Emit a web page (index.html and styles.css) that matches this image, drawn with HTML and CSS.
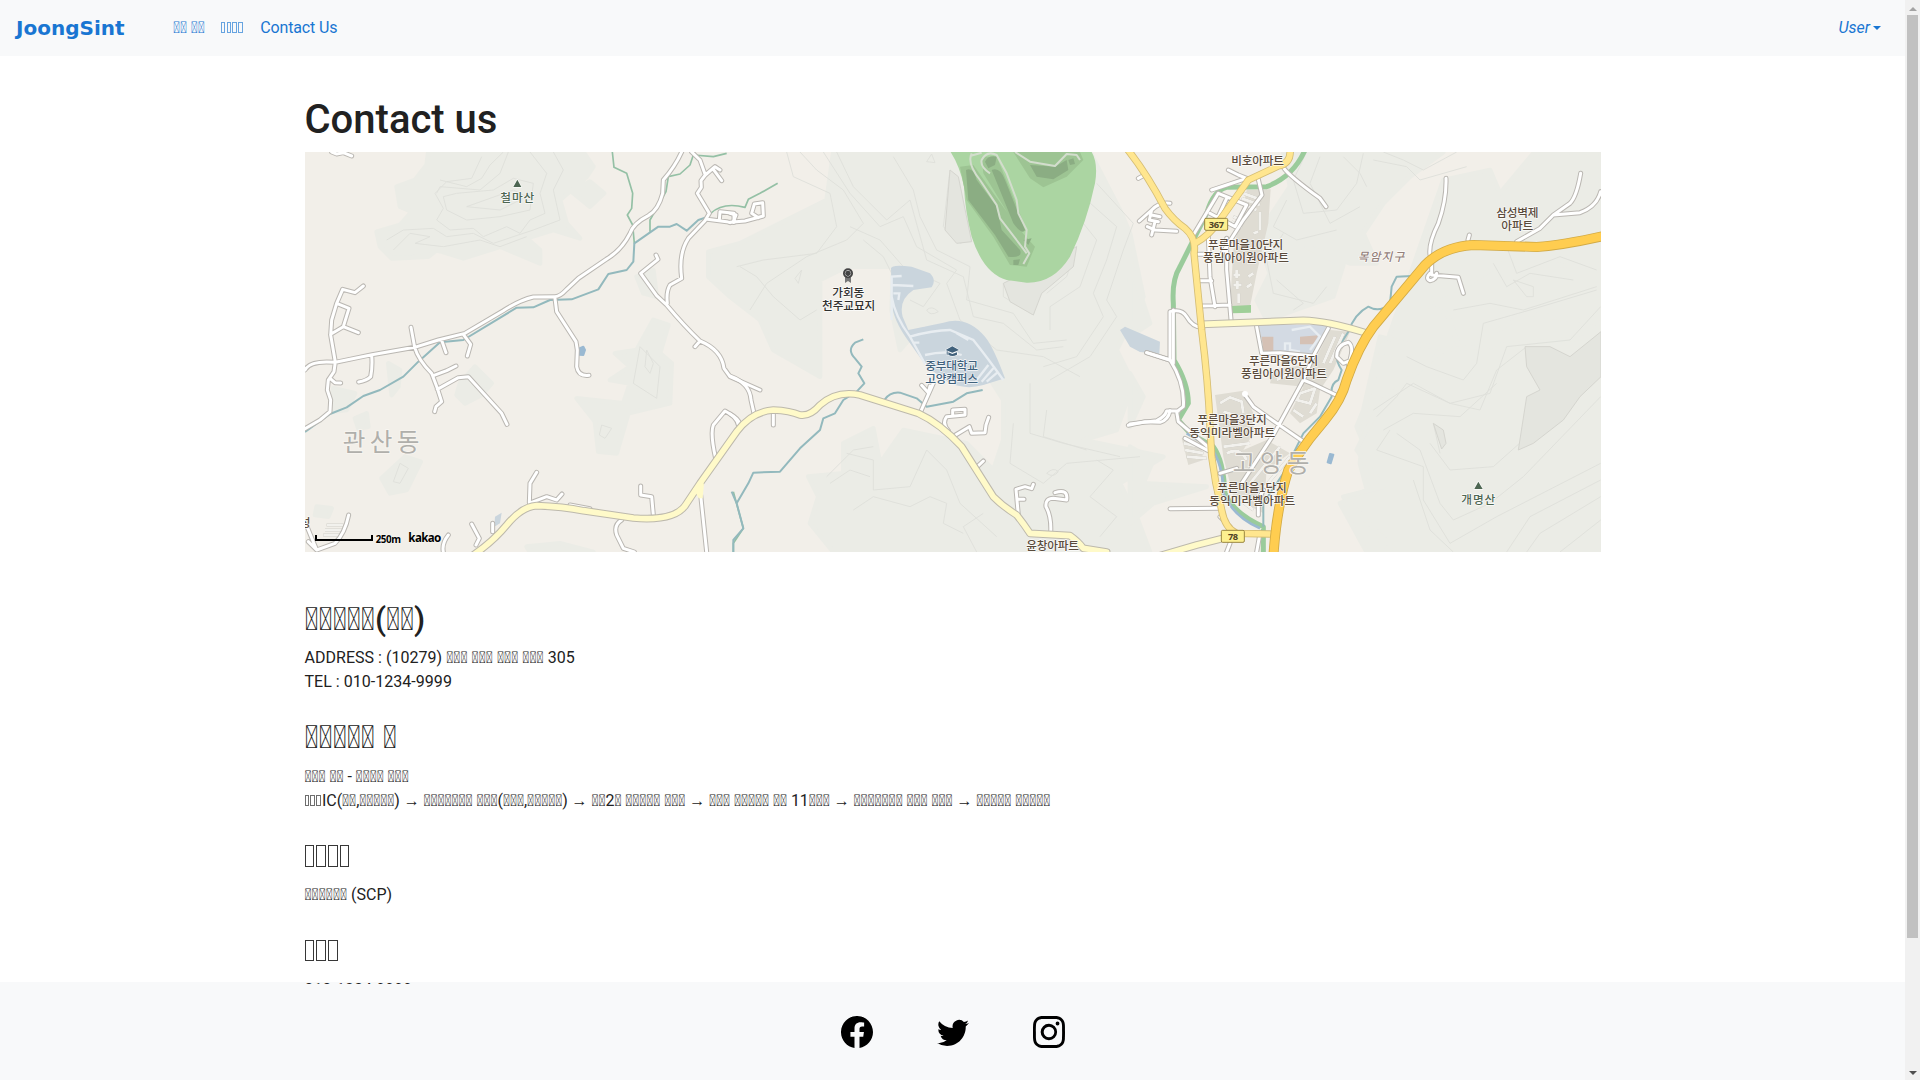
FILE: index.html
```html
<!DOCTYPE html>
<html lang="ko">
<head>
<meta charset="utf-8">
<title>Contact us</title>
<link rel="stylesheet" href="styles.css">
</head>
<body>
<div class="page">
  <nav class="navbar">
    <a class="brand">JoongSint</a>
    <div class="links">
      <a>&#xE001;&#xE001; &#xE001;&#xE001;</a>
      <a class="boxes"><i></i><i></i><i></i><i></i></a>
      <a>Contact Us</a>
    </div>
    <a class="user"><em>User</em><span class="caret"></span></a>
  </nav>

  <main class="content">
    <div class="container">
      <h1>Contact us</h1>
      <svg class="map" viewBox="15 6 3888 1200" preserveAspectRatio="none">
        <defs>
          <g id="lanes">
            <path d="M95 6L110 12L130 8L155 18M190 408L165 428L128 418L110 460L95 510L92 555L106 636L102 665L85 690L82 720L92 750L90 785L60 810L15 836M110 460L147 475L130 530L92 553M130 530L175 548M90 685L105 698L122 699M215 615Q218 650 212 680Q200 692 176 696M333 532L344 592Q355 630 395 670L412 715L425 755L408 770L404 785M400 677L440 662L468 648M412 718L475 683L505 680L605 790L621 823M424 568L438 608M490 553L512 583L502 618M765 445L770 485L828 575L832 600L830 650Q835 680 867 676M15 660Q30 630 106 637M1145 6Q1125 50 1090 90L1088 130Q1075 180 1045 197Q1000 220 990 250Q965 300 920 327L835 385L800 418Q780 440 765 440L700 441Q660 450 610 482L495 550L415 570L344 592L216 614L106 637M1175 6L1200 30L1216 75L1203 92L1204 112L1192 130L1228 190L1215 212L1165 265Q1135 310 1145 385L1110 405Q1098 425 1102 460M1216 75L1245 50L1260 60M1240 58L1265 92M1222 208L1280 215L1290 218M1258 210L1260 185L1302 190V217M1068 315L1074 328L1022 370L1070 437L1100 465Q1150 525 1200 573Q1265 600 1272 655L1290 680L1380 720M1200 573L1185 590M710 967L690 1000L688 1058M695 1057L740 1040L770 1050L786 1032M810 1065L870 1076M1022 1008V1035L1055 1040L1060 1095M965 1110Q940 1125 950 1155L970 1195L1003 1206M1202 1035L1220 1206M1315 825Q1310 800 1275 783L1240 825Q1230 850 1247 925M515 1122L538 1165L528 1185M578 1120V1145M445 1155Q425 1180 430 1206M146 1095Q135 1150 105 1180L50 1200L25 1175M15 1115L50 1200"/>
            <g transform="translate(1290 0)">
              <path d="M0 217L45 213L100 198L98 158L73 162L65 190L85 203M0 190L18 195L10 217M0 678Q60 700 63 750L72 790M0 792Q25 805 30 823M130 790V825M572 785L610 700M575 706L595 728L600 708M672 858L718 830L725 850L765 848L768 825L776 802M655 842Q635 820 650 800L705 795V778L668 780V798M742 950L760 933M865 1095L858 1018L885 1010L905 1016L910 1003M862 1048L882 1048M962 1150Q965 1100 948 1070Q945 1045 970 1045L1010 1050Q1015 1015 975 1028M1225 85L1240 77M1320 160Q1290 155 1265 180L1228 213M1265 180L1258 210L1285 215M1265 195L1290 200M1265 255L1275 215M1252 230L1275 240L1340 244M1250 608L1320 630L1330 640V480M1195 826L1245 815L1290 817Q1315 810 1320 782"/>
            </g>
            <g transform="translate(2490 0)">
              <path d="M462 55Q480 80 570 145L588 170M295 60L325 75L350 85L290 105L245 120M385 88L396 135L340 210L270 320M190 255L265 130L350 165L315 230L240 190M290 145L262 205M235 260L240 380L255 470M290 265V360L304 520M205 313H240M205 392H245M215 468L300 465M120 630V485Q155 475 170 500Q190 535 220 530M50 608L120 630Q165 700 160 770L140 785L145 815L245 900M0 822L80 812Q105 800 110 783H145M380 530L395 610L450 608L550 618L595 535M550 618L520 690L430 855L335 1000M520 690L545 700L622 737M345 735L370 770L440 820L525 878M120 1076L270 1075M270 970L320 955M165 865L240 905M900 315Q895 280 925 220Q950 150 948 85M905 320V375L985 382L1000 430M900 370Q885 385 900 392Q920 390 920 370M1160 275L1230 235L1270 195L1350 188Q1400 170 1412 125M1270 195L1320 160Q1340 140 1352 70M1018 255L1014 270M665 630L640 640L620 620Q620 585 655 577Q675 590 655 645M300 1180L290 1206M390 1150L380 1206M270 1100L300 1130M385 1095V1050L400 1020"/>
            </g>
          </g>
          <path id="local" d="M505 1225Q575 1180 620 1125Q665 1070 710 1067Q790 1070 850 1082L1000 1104Q1130 1115 1160 1060L1200 1000L1310 845Q1355 785 1420 780Q1470 782 1500 795Q1530 800 1560 765Q1610 720 1680 735L1855 790Q1920 820 1985 890L2080 1040Q2110 1070 2150 1095Q2170 1120 2190 1150L2310 1157Q2335 1175 2350 1195L2420 1206M2570 1220L2690 1185L2770 1165M2705 523L3010 511Q3080 512 3195 548"/>
          <path id="trunk" d="M2480 -5Q2540 70 2595 175Q2620 210 2655 235Q2690 265 2682 310L2705 540Q2725 700 2730 830L2735 920Q2745 1000 2765 1080Q2775 1135 2810 1150L2910 1152M2685 280Q2730 255 2760 210L2845 90L2935 48Q2975 40 2970 -5"/>
          <path id="highway" d="M2920 1220Q2930 1070 2965 960Q2990 920 3030 865L3075 810Q3125 750 3140 690Q3175 590 3220 530L3375 345Q3430 290 3520 285L3710 291Q3790 285 3910 258"/>
        </defs>

        <rect class="land" x="15" y="6" width="3888" height="1200"/>
        <g class="hill">
          <path d="M385 6L380 45L345 90L290 110L300 170L335 185L300 225L230 245L240 290L275 325L385 320L410 300L490 325L600 290L720 340L720 300L680 265L760 240L840 265L800 220L780 150L860 80L880 50L850 6ZM815 125L870 95L912 130L870 170ZM1060 510L1105 525L1080 610L1115 640L1110 760L985 790L950 910L895 905L885 815L830 745L970 760L990 700L930 690L990 650L945 610L1010 600ZM315 920L362 935L320 1020L270 1030L245 985ZM1225 305L1320 280L1580 150L1600 6L2370 6L2460 180L2490 250L2530 440L2490 520L2450 600L2500 700L2450 840L2350 870L2590 920L2460 1000L2510 1100L2550 1206L1600 1206L1530 1120L1555 1040L1525 980L1630 970L1630 880L1720 835L1740 940L1810 840L2000 880L2080 960L2110 870L2110 750L1990 560L1870 520L1800 600L1775 480L1780 350L1640 350L1560 390L1560 680L1420 600L1380 510L1290 440L1225 380ZM2950 6L2970 110L2870 260L2910 370L2870 450L2900 510L3100 440L3130 345L3020 290L3150 340L3230 340L3190 250L3250 160L3330 80L3430 6ZM3430 90L3570 60L3600 130L3700 10L3903 6V520L3680 490L3490 600L3480 700L3560 1206H3200L3120 1060L3240 1000L3170 830L3190 780L3240 560L3320 580L3480 600L3440 490L3370 460L3510 400L3600 340L3900 350V1206H3250L3180 940L3200 750Z"/>
          <path d="M480 700L525 650L575 700L545 735L495 760L470 735ZM165 805L200 790L205 830L175 835ZM265 640L300 660L295 710L275 735ZM100 715L165 730L140 780L95 785ZM2490 340L2550 520L2490 560ZM2490 670L2530 740L2490 830ZM2490 890L2560 930L2530 1000L2720 1010L2560 1060L2490 1120ZM50 1070L95 1075L85 1100L45 1095ZM680 1190L780 1180L880 1206H690ZM1010 380L1060 360L1070 440L1030 430ZM3240 760L3430 600L3903 560V1206H3290L3130 1040L3250 1010L3170 900Z"/>
        </g>
        <g class="contour">
          <path d="M420 90L500 110L545 85L570 45L610 6M410 130L420 110L540 120L600 70L625 6M545 20L515 85L440 95L405 130L430 175L410 210L450 240L520 235L550 260L620 230L660 250L690 210L735 190L720 130L740 70L690 6M430 140L470 130L580 120L640 85L700 100L690 180L600 200L500 210L440 180ZM500 170L640 120L680 140L600 180ZM260 270L310 240L400 235L440 260L520 250L580 280L700 240L780 210L760 120L790 60L760 6M280 300L330 250L390 260L345 280L430 290L540 270L600 290L680 260M1040 600L1060 640L1050 670L1035 650ZM1020 590L1080 650L1070 745L1000 700ZM905 825L935 835L915 865L898 855ZM300 940L325 955L300 1000L280 995Z"/>
          <g transform="translate(1290 0)">
            <path d="M170 6L190 80L300 130L320 230L260 310L100 330L20 350M210 6L260 60L340 120L400 220L350 270L230 320L110 400L60 480M280 6L360 130L450 230L520 200L560 290L680 360L650 400L690 510L800 600L940 620L1050 680M320 6L370 110L470 210L540 150L590 330L700 380L730 500L820 520L920 600L1000 590M490 20L550 120L570 200L620 300L720 350L710 450L850 490L910 580L1010 570M360 230L450 270L520 350L630 400L580 470L540 450M400 270L460 320L500 400M30 350L80 380L130 440L210 510L260 480M590 480Q605 465 625 485Q600 500 590 480M590 35L605 12L615 38ZM660 60L640 230L690 280L720 270M820 400L820 440L910 495L930 420M1040 290L1010 380L950 430M1100 100L1210 220L1180 300L1130 450L1160 500L1080 620L960 690M1070 150L1160 230L1130 330L1090 430L1120 500L1040 620L940 650M1060 220L1100 270L1050 410L960 470L960 540M950 970Q970 950 985 965Q970 985 950 970M195 385L215 360L205 400ZM350 910L430 930L430 1020L540 1010L590 900L650 960L690 1060L800 1160M370 1080L430 1040L540 1070L600 1040L650 1060L640 1120L700 1150M290 980L370 900L430 890M300 1000L360 960L420 980M850 820L840 940L940 1000L1010 940L1230 920M900 700L900 850L1000 880L1170 920M950 780L940 860L1070 900M760 1090L700 1130L740 1206M1100 930L1150 960L1080 1040L1160 1100L1110 1160"/>
          </g>
          <g transform="translate(2490 0)">
            <path d="M530 6L490 90L520 190L620 180L680 100L700 10M570 20L540 100L600 220L690 170M640 20L690 70L710 110M470 150L430 230L500 270L620 240M460 250L410 330L430 430L550 460L590 410M440 390L520 460L490 480M1150 390L1210 410V440L1190 440ZM970 480L1080 460L1180 480L1400 410M830 620L890 650L1000 690L1040 640L1060 520L1200 480L1400 420M730 780L850 700L960 760L1080 730L1130 590L1320 570L1412 470M740 800L800 740L830 700L960 760L1050 780L1100 660L1190 590M760 840L850 790L990 800L1100 700M780 840L740 900L880 950L880 1050L960 1180L1100 1100L1412 940M800 850L870 900L930 1060L970 1110L1080 1060L1180 980L1412 740M900 880L960 960L1090 950L1180 870M910 820L930 910M850 990L900 1140L970 1206M1412 990L1200 1100L1130 1206M1412 1040L1230 1150L1190 1206M1412 1110L1290 1206M730 30L830 50L870 90L1010 50M760 6L820 30L880 60L980 6M1130 290L1160 370L1290 320L1400 360M1090 340L1130 410L1200 370L1330 390"/>
          </g>
        </g>
        <g class="peak">
          <path d="M3675 590L3750 590L3810 620L3903 545V680L3840 740L3790 810L3700 880L3655 900L3680 740L3720 720L3680 650ZM3400 820L3430 840L3438 880L3425 897ZM1950 60L1935 240L1970 280L2015 275L1975 80ZM2110 400L2130 455L2200 495L2225 430L2320 350L2330 290Z"/>
        </g>
        <g class="urban">
          <path d="M2840 120L2912 118L2905 220L2870 370L2850 470H2790L2800 300ZM2745 735L2830 722L2860 790L2860 850L2830 900L2900 870L2970 910L2900 960L2890 1090L2800 1040L2770 920ZM3090 540L3150 545L3100 660L3060 720L3050 790L3000 820L2970 790L3010 710L2910 700L2920 660L3040 640ZM2645 865L2700 870L2710 930L2665 945Z"/>
        </g>
        <g class="campus">
          <path d="M1773 355Q1775 342 1835 350L1890 370Q1910 390 1895 412L1840 420Q1795 450 1808 500L1825 540L1930 518Q2000 495 2055 560Q2080 590 2115 685L2050 705Q2000 720 1950 700L1880 650L1830 580Q1770 500 1775 440ZM2460 540L2475 530L2580 575L2578 612L2520 606L2490 590ZM585 1100L605 1088L600 1120L583 1130Z"/>
          <path class="district" d="M2875 525H3085L3040 612H2895Z"/>
        </g>
        <path class="shop" d="M2885 560H2920V605H2890ZM3000 560L3055 556L3040 583H3000Z"/>
        <path class="lawn" d="M2795 468L2853 465V488L2797 490Z"/>

        <g class="golf" transform="translate(1290 0)">
          <path class="green" d="M662 6H1085Q1105 40 1095 100Q1070 220 1020 320Q970 400 890 398L830 390Q760 370 725 260Q705 180 702 110Q690 50 662 6Z"/>
          <path class="rough" d="M690 50L730 45L790 130L870 240L915 290L890 350L840 345L790 260L710 150ZM755 20L800 20L890 240L870 250L760 70ZM850 6H1050L1060 30L1010 80L940 112L900 85Z"/>
          <path class="fairway" d="M708 60Q730 50 740 90L800 170L815 240L870 300Q880 325 835 320L795 255L715 150ZM785 60Q810 50 825 90L885 240Q875 255 850 220ZM900 45L975 50L1010 30L1015 60L970 88L920 80ZM765 35Q775 15 800 20L795 45L775 55ZM850 330L870 328L865 345H850ZM880 270L905 265L895 285ZM1015 30L1030 25L1035 42L1020 45Z"/>
          <path class="cart" d="M725 10Q710 40 750 90L800 165L810 205L890 310M780 70Q750 50 755 30Q770 0 800 15L830 70L860 150L865 190L890 240L885 290L898 310L880 342M855 6L900 35L975 48L1010 12L1040 15L1050 30M720 18L755 8"/>
        </g>

        <g class="stream">
          <path class="bank" d="M937 6L942 52L980 70L998 130L995 175L982 195L998 225L1003 280M1280 10L1240 20L1180 15L1170 45L1140 72L1105 80L1098 125L1050 210V245M1232 190Q1270 155 1335 172L1345 148L1380 130L1433 100M1300 1025L1330 1135L1300 1180V1206"/>
          <path d="M15 846L90 792L140 772L190 738L240 720L310 680L355 635L420 577L490 570L650 473L700 472L750 450L815 448L895 418L925 372L980 360L1000 335L1003 280L1075 230L1110 230L1130 222L1160 242L1195 210L1225 200"/>
          <path d="M1690 568L1665 578Q1640 600 1665 625L1685 650L1675 670L1693 700L1670 725L1630 750L1605 790L1570 805L1560 840L1500 895L1440 965L1360 968L1345 1000L1310 1060L1295 1025M1310 1060L1330 1135L1300 1170V1206M1753 750Q1770 725 1800 728L1850 745L1880 770L1960 755L2000 730L2048 720"/>
          <path class="river" d="M3015 0Q2980 80 2900 110L2780 112Q2740 120 2720 190L2640 350Q2615 390 2620 460L2622 630Q2665 700 2665 760L2635 810L2670 850L2740 890Q2770 930 2775 1030Q2800 1090 2890 1130V1206"/>
          <path class="river blue" d="M2660 850L2730 890Q2770 940 2770 1030Q2800 1100 2880 1135"/>
          <path d="M3390 315L3375 345M3335 378L3290 380L3275 410L3270 460Q3240 490 3205 470Q3165 490 3145 545L3110 600Q3105 630 3125 660L3115 690Q3090 700 3095 740L3060 800L3010 850L2950 970L2890 1060V1130"/>
          <path class="pond" d="M838 595L850 590L855 600L850 615L838 614ZM3090 912L3100 914L3092 940L3083 937Z"/>
        </g>

        <g class="blocks">
          <path d="M2830 130L2885 150M2825 145L2880 165M2820 160L2870 180M2800 200L2830 215M2795 215L2825 235M2880 185V240M2860 250L2875 245M2800 375H2820M2810 360V385M2845 380L2860 370M2800 405H2825M2812 392V418M2840 412L2855 402M2816 430V460M2760 760L2790 742L2825 755L2830 790M2770 785L2820 800M2770 890L2850 880M2780 910Q2820 890 2840 930M3090 640L3130 550M3070 640L3105 560M2930 690L2990 660M3000 730L3045 715L3030 760L2990 750ZM3030 790L3050 760M2980 780L3010 800M2850 1000L2940 890M2870 1040L2970 920M2820 1050L2860 1080M2650 880L2700 890M2655 900L2710 910M2660 920L2720 925M80 1125H130M75 1140H128M70 1155H120"/>
        </g>
        <path class="path" d="M1775 510V380L1805 378M1777 405L1840 408M1780 430L1798 430L1795 450M1775 440Q1785 500 1830 560L1885 660M1830 560Q1900 540 1950 540L2020 570Q2060 620 2110 690M1970 550L2005 570M1840 578H1858M1875 615Q1940 600 1985 615M2030 690L2065 645M2045 695L2080 655M2060 695L2095 665M2975 540L3030 530L3060 560L3030 600M2955 600V580H2970V600L3000 605"/>

        <use href="#lanes" class="casing lane"/>
        <use href="#lanes" class="fill lane"/>
        <use href="#local" class="casing local"/>
        <use href="#local" class="fill local"/>
        <path class="ramp" d="M1180 1015L1212 1000L1208 1045L1196 1045Z"/>
        <use href="#trunk" class="casing trunk"/>
        <use href="#trunk" class="fill trunk"/>
        <use href="#highway" class="casing highway"/>
        <use href="#highway" class="fill highway"/>
        <circle class="knob" cx="2835" cy="732" r="9"/>

        <g class="shield">
          <rect x="2714" y="205" width="69" height="36" rx="4"/>
          <rect x="2764" y="1141" width="69" height="36" rx="4"/>
          <text x="2749" y="234" textLength="46">367</text>
          <text x="2799" y="1170" textLength="30">78</text>
        </g>
        <g class="town">
          <text x="243" y="902" textLength="230">관산동</text>
          <text x="2913" y="966" textLength="230">고양동</text>
        </g>
        <g class="label mountain">
          <path d="M652 89L664 111H640ZM3535 995L3548 1017H3523Z"/>
          <text x="652" y="155" textLength="102">철마산</text>
          <text x="3535" y="1061" textLength="102">개명산</text>
        </g>
        <g class="label place">
          <text x="1645" y="441" textLength="96">가회동</text>
          <text x="1646" y="481" textLength="160">천주교묘지</text>
          <path class="tail" d="M1635 380H1653V399L1644 393L1635 399Z"/>
          <circle class="medal" cx="1644" cy="370" r="15"/>
          <circle class="ring" cx="1644" cy="370" r="8"/>
        </g>
        <g class="label school">
          <text x="1955" y="661" textLength="158">중부대학교</text>
          <text x="1955" y="699" textLength="158">고양캠퍼스</text>
          <path d="M1937 600L1957 589L1977 600L1957 608ZM1945 607L1957 612L1971 607V614Q1957 622 1945 614ZM1940 604H1943V614H1940Z"/>
        </g>
        <g class="label apt">
          <text x="2873" y="45" textLength="158">비호아파트</text>
          <text x="2837" y="297" textLength="226">푸른마을10단지</text>
          <text x="2838" y="335" textLength="258">풍림아이원아파트</text>
          <text x="2951" y="645" textLength="208">푸른마을6단지</text>
          <text x="2952" y="683" textLength="258">풍림아이원아파트</text>
          <text x="2796" y="823" textLength="208">푸른마을3단지</text>
          <text x="2797" y="861" textLength="258">동익미라벨아파트</text>
          <text x="2856" y="1026" textLength="208">푸른마을1단지</text>
          <text x="2857" y="1064" textLength="258">동익미라벨아파트</text>
          <text x="3652" y="202" textLength="127">삼성벽제</text>
          <text x="3652" y="240" textLength="96">아파트</text>
          <text x="2258" y="1200" textLength="158">윤창아파트</text>
          <text x="15" y="1131">성</text>
        </g>
        <text class="label area" x="3243" y="333" textLength="140">목암지구</text>
        <path class="scale" d="M48 1155V1170H216V1155"/>
        <g class="credit">
          <text x="227" y="1179" textLength="76">250m</text>
          <text class="logo" x="325" y="1177" textLength="99">kakao</text>
        </g>
      </svg>

      <section class="first">
        <h2>&#xE001;&#xE001;&#xE001;&#xE001;&#xE001;(&#xE001;&#xE001;)</h2>
        <p>ADDRESS : (10279) &#xE001;&#xE001;&#xE001; &#xE001;&#xE001;&#xE001; &#xE001;&#xE001;&#xE001; &#xE001;&#xE001;&#xE001; 305<br>TEL : 010-1234-9999</p>
      </section>
      <section>
        <h2>&#xE001;&#xE001;&#xE001;&#xE001;&#xE001; &#xE001;</h2>
        <p class="route">&#xE001;&#xE001;&#xE001; &#xE001;&#xE001; - &#xE001;&#xE001;&#xE001;&#xE001; &#xE001;&#xE001;&#xE001;<br><span class="boxes"><i></i><i></i><i></i></span>IC(&#xE001;&#xE001;,&#xE001;&#xE001;&#xE001;&#xE001;&#xE001;) → &#xE001;&#xE001;&#xE001;&#xE001;&#xE001;&#xE001;&#xE001; &#xE001;&#xE001;&#xE001;(&#xE001;&#xE001;&#xE001;,&#xE001;&#xE001;&#xE001;&#xE001;&#xE001;) → &#xE001;&#xE001;2&#xE001; &#xE001;&#xE001;&#xE001;&#xE001;&#xE001; &#xE001;&#xE001;&#xE001; → &#xE001;&#xE001;&#xE001; &#xE001;&#xE001;&#xE001;&#xE001;&#xE001; &#xE001;&#xE001; 11&#xE001;&#xE001;&#xE001; → &#xE001;&#xE001;&#xE001;&#xE001;&#xE001;&#xE001;&#xE001; &#xE001;&#xE001;&#xE001; &#xE001;&#xE001;&#xE001; → &#xE001;&#xE001;&#xE001;&#xE001;&#xE001; &#xE001;&#xE001;&#xE001;&#xE001;&#xE001;</p>
      </section>
      <section>
        <h2 class="boxes"><i></i><i></i><i></i><i></i></h2>
        <p>&#xE001;&#xE001;&#xE001;&#xE001;&#xE001;&#xE001; (SCP)</p>
      </section>
      <section>
        <h2 class="boxes"><i></i><i></i><i></i></h2>
        <p>010-1234-9999</p>
      </section>
    </div>
  </main>

  <footer class="footer">
    <svg viewBox="0 0 16 16"><path d="M16 8.049c0-4.446-3.582-8.05-8-8.05C3.58 0-.002 3.603-.002 8.05c0 4.017 2.926 7.347 6.75 7.951v-5.625h-2.03V8.05H6.75V6.275c0-2.017 1.195-3.131 3.022-3.131.876 0 1.791.157 1.791.157v1.98h-1.009c-.993 0-1.303.621-1.303 1.258v1.51h2.218l-.354 2.326H9.25V16c3.824-.604 6.75-3.934 6.75-7.951z"/></svg>
    <svg viewBox="0 0 16 16"><path d="M5.026 15c6.038 0 9.341-5.003 9.341-9.334 0-.14 0-.282-.006-.422A6.685 6.685 0 0 0 16 3.542a6.658 6.658 0 0 1-1.889.518 3.301 3.301 0 0 0 1.447-1.817 6.533 6.533 0 0 1-2.087.793A3.286 3.286 0 0 0 7.875 6.03a9.325 9.325 0 0 1-6.767-3.429 3.289 3.289 0 0 0 1.018 4.382A3.323 3.323 0 0 1 .64 6.575v.045a3.288 3.288 0 0 0 2.632 3.218 3.203 3.203 0 0 1-.865.115 3.23 3.23 0 0 1-.614-.057 3.283 3.283 0 0 0 3.067 2.277A6.588 6.588 0 0 1 .78 13.58a6.32 6.32 0 0 1-.78-.045A9.344 9.344 0 0 0 5.026 15z"/></svg>
    <svg viewBox="0 0 16 16"><path d="M8 0C5.829 0 5.556.01 4.703.048 3.85.088 3.269.222 2.76.42a3.917 3.917 0 0 0-1.417.923A3.927 3.927 0 0 0 .42 2.76C.222 3.268.087 3.85.048 4.7.01 5.555 0 5.827 0 8.001c0 2.172.01 2.444.048 3.297.04.852.174 1.433.372 1.942.205.526.478.972.923 1.417.444.445.89.719 1.416.923.51.198 1.09.333 1.942.372C5.555 15.99 5.827 16 8 16s2.444-.01 3.298-.048c.851-.04 1.434-.174 1.943-.372a3.916 3.916 0 0 0 1.416-.923c.445-.445.718-.891.923-1.417.197-.509.332-1.09.372-1.942C15.99 10.445 16 10.173 16 8s-.01-2.445-.048-3.299c-.04-.851-.175-1.433-.372-1.941a3.926 3.926 0 0 0-.923-1.417A3.911 3.911 0 0 0 13.24.42c-.51-.198-1.092-.333-1.943-.372C10.443.01 10.172 0 7.998 0h.003zm-.717 1.442h.718c2.136 0 2.389.007 3.232.046.78.035 1.204.166 1.486.275.373.145.64.319.92.599.28.28.453.546.598.92.11.281.24.705.275 1.485.039.843.047 1.096.047 3.231s-.008 2.389-.047 3.232c-.035.78-.166 1.203-.275 1.485a2.47 2.47 0 0 1-.599.919c-.28.28-.546.453-.92.598-.28.11-.704.24-1.485.276-.843.038-1.096.047-3.232.047s-2.39-.009-3.233-.047c-.78-.036-1.203-.166-1.485-.276a2.478 2.478 0 0 1-.92-.598 2.48 2.48 0 0 1-.6-.92c-.109-.281-.24-.705-.275-1.485-.038-.843-.046-1.096-.046-3.233 0-2.136.008-2.388.046-3.231.036-.78.166-1.204.276-1.486.145-.373.319-.64.599-.92.28-.28.546-.453.92-.598.282-.11.705-.24 1.485-.276.738-.034 1.024-.044 2.515-.045v.002zm4.988 1.328a.96.96 0 1 0 0 1.92.96.96 0 0 0 0-1.92zm-4.27 1.122a4.109 4.109 0 1 0 0 8.217 4.109 4.109 0 0 0 0-8.217zm0 1.441a2.667 2.667 0 1 1 0 5.334 2.667 2.667 0 0 1 0-5.334z"/></svg>
  </footer>
</div>
<div class="scrollbar">
  <span class="up"></span>
  <span class="thumb"></span>
  <span class="down"></span>
</div>
</body>
</html>
```
FILE: styles.css
```css
* { box-sizing: border-box; }
body {
  margin: 0;
  height: 1080px;
  display: flex;
  overflow: hidden;
  font: 16px/24px Roboto, sans-serif;
  color: #212121;
  background: #fff;
}
.page { width: 1905px; height: 1080px; display: flex; flex-direction: column; }

.navbar {
  flex: none;
  height: 56px;
  padding: 0 24px 0 16px;
  display: flex;
  align-items: center;
  background: #f8f9fa;
  color: #1976d2;
}
.brand { width: 157px; font: bold 20px/30px "DejaVu Sans", sans-serif; }
.links { display: flex; gap: 16px; flex: 1; letter-spacing: -.13px; }
.links, .user { padding-bottom: 1px; }
.user { display: flex; align-items: center; gap: 3px; }
.user em { font-style: italic; }
.caret { border: 4.8px solid transparent; border-top-color: currentColor; border-bottom: 0; }

.boxes { letter-spacing: 0; }
.boxes i {
  display: inline-block;
  width: .29em;
  height: .67em;
  margin-right: .078em;
  border: 1px solid currentColor;
  opacity: .65;
}
h2.boxes i { opacity: .9; margin-right: .083em; }

.content {
  flex: none;
  height: 928px;
  padding-top: 40px;
  overflow: hidden;
  background: linear-gradient(#fff 925.5px, #f8f9fa 926.5px);
}
.container { width: 1296px; margin: 0 auto; }
h1, h2, p { margin: 0; }
h1 { font-size: 40px; line-height: 48px; font-weight: 500; margin-bottom: 8px; }
h2 { font-size: 32px; line-height: 38.4px; font-weight: 500; margin-bottom: 8px; height: 38.4px; letter-spacing: -.1px; }
section { margin-bottom: 24px; }
.first { margin-top: 48px; }
.first p { letter-spacing: .03px; }
.route { letter-spacing: -.075px; }

.footer {
  flex: 1;
  display: flex;
  justify-content: center;
  align-items: center;
  gap: 64px;
  background: #f8f9fa;
}
.footer svg { width: 32px; height: 32px; fill: #000; }

.scrollbar {
  width: 15px;
  height: 1080px;
  padding: 7px 2px 5px;
  display: flex;
  flex-direction: column;
  align-items: center;
  background: #f1f1f1;
}
.up { border: 4px solid transparent; border-bottom-color: #a3a3a3; border-top: 0; margin-bottom: 4px; }
.thumb { width: 11px; height: 923px; background: #c1c1c1; }
.down { margin-top: auto; border: 4px solid transparent; border-top-color: #505050; border-bottom: 0; }

/* map */
.map { display: block; width: 1296px; height: 400px; }
.land { fill: #f2efe9; }
.hill { fill: #ebece6; stroke: #ebece6; stroke-width: 14; stroke-linejoin: round; }
.contour { fill: none; stroke: #dfe0da; stroke-width: 2.8; stroke-linejoin: round; }
.peak { fill: #e4e5df; stroke: #d5d5cf; stroke-width: 3; }
.urban { fill: #dfdcd3; }
.campus { fill: #cad5dd; }
.district { fill: #d3dae3; }
.shop { fill: #d5c1b5; }
.lawn { fill: #9fcf98; }
.green { fill: #abd5a2; }
.rough { fill: #9dc493; }
.fairway { fill: #8bad83; }
.cart { fill: none; stroke: #d3ddcd; stroke-width: 6; stroke-linejoin: round; }
.stream { fill: none; stroke: #93b9bd; stroke-width: 6; stroke-linejoin: round; }
.stream .bank { stroke: #94c0a5; stroke-width: 5; }
.stream .river { stroke: #9acb9b; stroke-width: 15; }
.stream .blue { stroke: #9ab9d2; stroke-width: 8; }
.stream .pond { fill: #9ab9d2; stroke: #9ab9d2; }
.blocks { fill: none; stroke: #f2f1ed; stroke-width: 9; filter: drop-shadow(0 0 2px #b0aca2); }
.path { fill: none; stroke: #e8edf1; stroke-width: 7; }
.casing, .fill { fill: none; stroke-linecap: round; stroke-linejoin: round; }
.casing.lane { stroke: #bab7b2; stroke-width: 15; }
.fill.lane { stroke: #fff; stroke-width: 9; }
.casing.local { stroke: #bdb9ac; stroke-width: 23; }
.fill.local { stroke: #fffac9; stroke-width: 17; }
.ramp { fill: #fffac9; }
.casing.trunk { stroke: #d5bd74; stroke-width: 22; }
.fill.trunk { stroke: #ffe68f; stroke-width: 17; }
.casing.highway { stroke: #d2aa45; stroke-width: 30; }
.fill.highway { stroke: #ffcd50; stroke-width: 25; }
.knob { fill: #fff; }
.map text { font-family: "Noto Sans CJK KR", sans-serif; text-anchor: middle; font-weight: 500; }
.shield rect { fill: #fdf08f; stroke: #9b8741; stroke-width: 3; }
.map .shield text { font: bold 28px "Noto Sans", sans-serif; fill: #4d4225; }
.town text { font-size: 74px; font-weight: 400; fill: #b0afab; stroke: #f8f6f1; stroke-width: 5; paint-order: stroke; }
.label { font-size: 35px; stroke: #ffffffd0; stroke-width: 4; stroke-linejoin: round; paint-order: stroke; }
.mountain { fill: #4d6652; }
.place { fill: #30302e; }
.school { fill: #40617c; }
.apt { fill: #5a4b3c; }
.area { fill: #94807a; font-style: italic; }
.tail { fill: #777; stroke: none; }
.medal { fill: #444; stroke: none; }
.ring { fill: #444; stroke: #fff; stroke-width: 3; }
.scale { fill: none; stroke: #000; stroke-width: 6; }
.map .credit text { font: bold 30px "Noto Sans", sans-serif; text-anchor: start; stroke: #f8f6f1; stroke-width: 3; paint-order: stroke; }
.map .credit .logo { font-size: 35px; }
```
